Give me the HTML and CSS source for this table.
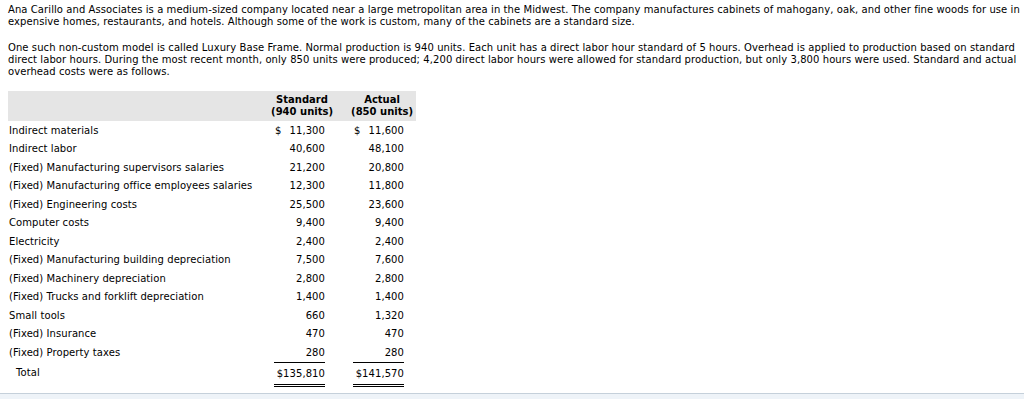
FILE: index.html
```html
<!DOCTYPE html>
<html>
<head>
<meta charset="utf-8">
<link rel="stylesheet" href="styles.css">
</head>
<body>
<div class="content">
<p class="para">Ana Carillo and Associates is a medium-sized company located near a large metropolitan area in the Midwest. The company manufactures cabinets of mahogany, oak, and other fine woods for use in expensive homes, restaurants, and hotels. Although some of the work is custom, many of the cabinets are a standard size.</p>
<p class="para last">One such non-custom model is called Luxury Base Frame. Normal production is 940 units. Each unit has a direct labor hour standard of 5 hours. Overhead is applied to production based on standard direct labor hours. During the most recent month, only 850 units were produced; 4,200 direct labor hours were allowed for standard production, but only 3,800 hours were used. Standard and actual overhead costs were as follows.</p>
<table class="costs">
<colgroup>
<col class="col-label">
<col class="col-std">
<col class="col-act">
</colgroup>
<thead>
<tr class="head">
<th class="label"></th>
<th class="hnum"><span class="htext">Standard<br>(940 units)</span></th>
<th class="hnum"><span class="htext">Actual<br>(850 units)</span></th>
</tr>
</thead>
<tbody>
<tr><td class="label">Indirect materials</td><td class="num c2"><span class="amt"><span>$</span><span>11,300</span></span></td><td class="num c3"><span class="amt"><span>$</span><span>11,600</span></span></td></tr>
<tr><td class="label">Indirect labor</td><td class="num c2">40,600</td><td class="num c3">48,100</td></tr>
<tr><td class="label">(Fixed) Manufacturing supervisors salaries</td><td class="num c2">21,200</td><td class="num c3">20,800</td></tr>
<tr><td class="label">(Fixed) Manufacturing office employees salaries</td><td class="num c2">12,300</td><td class="num c3">11,800</td></tr>
<tr><td class="label">(Fixed) Engineering costs</td><td class="num c2">25,500</td><td class="num c3">23,600</td></tr>
<tr><td class="label">Computer costs</td><td class="num c2">9,400</td><td class="num c3">9,400</td></tr>
<tr><td class="label">Electricity</td><td class="num c2">2,400</td><td class="num c3">2,400</td></tr>
<tr><td class="label">(Fixed) Manufacturing building depreciation</td><td class="num c2">7,500</td><td class="num c3">7,600</td></tr>
<tr><td class="label">(Fixed) Machinery depreciation</td><td class="num c2">2,800</td><td class="num c3">2,800</td></tr>
<tr><td class="label">(Fixed) Trucks and forklift depreciation</td><td class="num c2">1,400</td><td class="num c3">1,400</td></tr>
<tr><td class="label">Small tools</td><td class="num c2">660</td><td class="num c3">1,320</td></tr>
<tr><td class="label">(Fixed) Insurance</td><td class="num c2">470</td><td class="num c3">470</td></tr>
<tr><td class="label">(Fixed) Property taxes</td><td class="num c2">280</td><td class="num c3">280</td></tr>
<tr class="total"><td class="label total-label">Total</td><td class="num c2"><span class="tot">$135,810</span></td><td class="num c3"><span class="tot">$141,570</span></td></tr>
</tbody>
</table>
</div>
<div class="footer"></div>
</body>
</html>
```

FILE: styles.css
```css
html, body {
  margin: 0;
  padding: 0;
  background: #ffffff;
}
body {
  font-family: "DejaVu Sans", Verdana, sans-serif;
  font-size: 10px;
  letter-spacing: 0.08px;
  color: #000;
}
.content {
  padding: 4px 0 0 8px;
  height: 393px;
  box-sizing: border-box;
}
.para {
  margin: 0 0 14px 0;
  line-height: 12px;
}
.para.last {
  margin-bottom: 13px;
}
.costs {
  border-collapse: collapse;
  table-layout: fixed;
  width: 408px;
  margin: 0;
}
.col-label {
  width: 260px;
}
.col-std {
  width: 68px;
}
.col-act {
  width: 80px;
}
.costs .head th {
  background: #e5e5e5;
  font-weight: bold;
  letter-spacing: 0;
  height: 30px;
  padding: 0;
  line-height: 12px;
  vertical-align: middle;
  white-space: nowrap;
}
.costs td {
  height: 18.5px;
  padding: 0;
  vertical-align: middle;
  white-space: nowrap;
}
.costs .label {
  text-align: left;
  padding-left: 1px;
}
.costs th.hnum {
  text-align: right;
  padding-right: 3px;
}
.htext {
  display: inline-block;
  text-align: center;
}
.costs td.num {
  text-align: right;
}
.costs td.c2 {
  padding-right: 11px;
}
.costs td.c3 {
  padding-right: 12px;
}
.amt {
  display: inline-flex;
  justify-content: space-between;
  width: 50px;
}
.total td {
  vertical-align: top;
  padding-top: 0;
}
.tot {
  display: inline-block;
  width: 51px;
  text-align: right;
  line-height: 12px;
  border-top: 1px solid #000;
  border-bottom: 3px double #000;
  padding: 5px 0 4px 0;
}
.costs .total-label {
  padding-left: 8px;
  padding-top: 5px;
}
.footer {
  height: 6px;
  border-top: 1px solid #c5d0da;
  background: #eef3f8;
}
```
